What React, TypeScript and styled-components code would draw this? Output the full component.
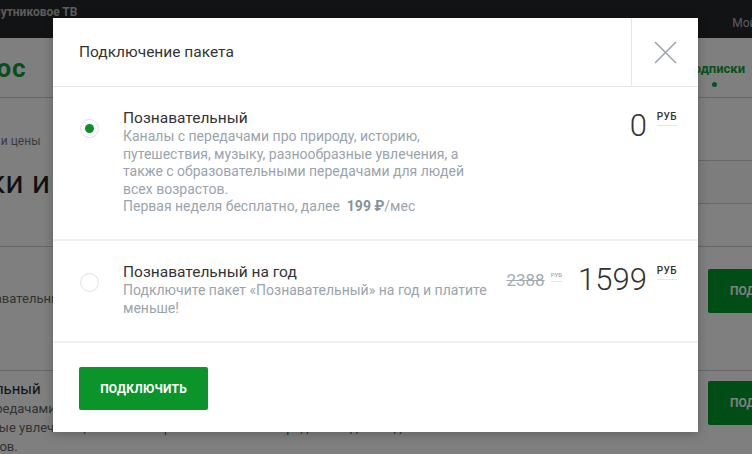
import React from "react";
import styled, { createGlobalStyle } from "styled-components";

const Global = createGlobalStyle`
  html, body { margin: 0; padding: 0; width: 752px; height: 454px; overflow: hidden; background: #fff; }
  body { font-family: Roboto, "Noto Sans", "Liberation Sans", sans-serif; color: #333; }
  * { box-sizing: border-box; }
`;

/* ---------- background page ---------- */
const Page = styled.div`
  width: 752px;
  height: 454px;
  overflow: hidden;
  position: relative;
  background: #fff;
`;

const TopBar = styled.div`
  height: 38px;
  background: #24262a;
  display: flex;
  justify-content: space-between;
  color: #b8b8b8;
  font-size: 12px;
`;

const TopLink = styled.span<{ $shift: number; $top: number; $bold?: boolean }>`
  margin-left: ${(p) => p.$shift}px;
  margin-right: ${(p) => (p.$shift === 0 ? -53 : 0)}px;
  padding-top: ${(p) => p.$top}px;
  font-weight: ${(p) => (p.$bold ? 700 : 400)};
  white-space: nowrap;
`;

const NavBar = styled.div`
  height: 60px;
  border-bottom: 1px solid #cfcfcf;
  display: flex;
  align-items: center;
  justify-content: space-between;
`;

const Logo = styled.div`
  margin-left: -72px;
  font-size: 26px;
  font-weight: 700;
  color: #159c3a;
  letter-spacing: 1px;
`;

const NavItem = styled.div`
  margin-right: 7px;
  display: flex;
  flex-direction: column;
  align-items: center;
  gap: 6px;
  font-size: 13px;
  font-weight: 700;
  color: #12a23c;
  padding-top: 12px;
  &::after {
    content: "";
    width: 5px;
    height: 5px;
    border-radius: 50%;
    background: #12a23c;
  }
`;

const Content = styled.div`
  display: flex;
  flex-direction: column;
`;

const Crumbs = styled.div`
  margin: 36px 0 0 -45px;
  font-size: 12px;
  color: #777;
`;

const HeadRow = styled.div`
  display: flex;
  justify-content: space-between;
  align-items: center;
  margin-top: 12px;
`;

const Heading = styled.h1`
  margin: 0 0 0 -125px;
  font-size: 32px;
  font-weight: 400;
  color: #222;
  white-space: nowrap;
`;

const SearchBox = styled.div`
  width: 160px;
  height: 44px;
  margin-right: -60px;
  border-top: 1px solid #d0d0d0;
  border-bottom: 1px solid #d0d0d0;
  background: #fbfbfb;
`;

const List = styled.div`
  margin-top: 42px;
  border-top: 1px solid #cfcfcf;
`;

const PkgRow = styled.div<{ $h: number }>`
  height: ${(p) => p.$h}px;
  border-bottom: 1px solid #cfcfcf;
  display: flex;
  justify-content: space-between;
  align-items: flex-start;
`;

const PkgText = styled.div<{ $shift: number; $top: number }>`
  margin-left: ${(p) => p.$shift}px;
  padding-top: ${(p) => p.$top}px;
  width: 500px;
`;

const PkgTitle = styled.div`
  font-size: 15px;
  color: #222;
  line-height: 20px;
`;

const PkgDesc = styled.div`
  font-size: 13px;
  color: #666;
  line-height: 19px;
`;

const PageBtn = styled.div<{ $top: number }>`
  margin-top: ${(p) => p.$top}px;
  width: 100px;
  height: 44px;
  margin-right: -56px;
  background: #009a2a;
  border-radius: 2px;
  color: #fff;
  font-size: 12px;
  font-weight: 700;
  display: flex;
  align-items: center;
  padding-left: 22px;
`;

/* ---------- overlay & modal ---------- */
const Overlay = styled.div`
  position: absolute;
  inset: 0;
  background: rgba(0, 0, 0, 0.5);
  padding: 18px 0 0 53px;
`;

const Modal = styled.div`
  width: 645px;
  height: 414px;
  background: #fff;
  display: flex;
  flex-direction: column;
  box-shadow: 0 2px 10px rgba(0, 0, 0, 0.25);
`;

const Header = styled.div`
  height: 69px;
  display: flex;
  border-bottom: 1px solid #e2e7e9;
`;

const Title = styled.div`
  flex: 1;
  padding-left: 26px;
  display: flex;
  align-items: center;
  font-size: 15.5px;
  color: #333;
`;

const Close = styled.button`
  width: 67px;
  border: none;
  border-left: 1px solid #e2e7e9;
  background: transparent;
  padding: 0;
  display: flex;
  align-items: center;
  justify-content: center;
  cursor: pointer;
`;

const Option = styled.div<{ $h: number }>`
  height: ${(p) => p.$h}px;
  border-bottom: 2px solid #eef0f1;
  display: flex;
  align-items: flex-start;
  padding: 21px 21px 0 27px;
`;

const Radio = styled.div<{ $on?: boolean }>`
  width: 19px;
  height: 19px;
  flex: none;
  margin-top: 11px;
  border-radius: 50%;
  border: 1px solid #dde2e4;
  display: flex;
  align-items: center;
  justify-content: center;
  &::after {
    content: "";
    width: 9px;
    height: 9px;
    border-radius: 50%;
    background: ${(p) => (p.$on ? "#0a8f2b" : "transparent")};
  }
`;

const Info = styled.div`
  margin-left: 24px;
  width: 368px;
`;

const OptTitle = styled.div`
  font-size: 15.5px;
  line-height: 20px;
  color: #333;
`;

const OptDesc = styled.div`
  font-size: 14px;
  line-height: 17.5px;
  color: #9aa4ad;
  b {
    font-weight: 700;
    color: #86919b;
  }
`;

const Prices = styled.div`
  margin-left: auto;
  display: flex;
  align-items: flex-start;
`;

const Price = styled.div<{ $old?: boolean }>`
  display: flex;
  align-items: flex-start;
  margin-left: ${(p) => (p.$old ? 0 : 16)}px;
  margin-top: ${(p) => (p.$old ? 8 : 0)}px;
`;

const Amount = styled.span<{ $old?: boolean }>`
  font-size: ${(p) => (p.$old ? 17 : 31)}px;
  line-height: ${(p) => (p.$old ? 20 : 36)}px;
  font-weight: ${(p) => (p.$old ? 400 : 300)};
  color: ${(p) => (p.$old ? "#a3acb4" : "#333")};
  text-decoration: ${(p) => (p.$old ? "line-through" : "none")};
`;

const Cur = styled.span<{ $old?: boolean }>`
  margin-left: ${(p) => (p.$old ? 6 : 10)}px;
  margin-top: ${(p) => (p.$old ? 1 : 3)}px;
  font-size: ${(p) => (p.$old ? 6 : 10)}px;
  letter-spacing: ${(p) => (p.$old ? 0 : 0.4)}px;
  line-height: ${(p) => (p.$old ? 8 : 11)}px;
  padding-bottom: ${(p) => (p.$old ? 2 : 3)}px;
  border-bottom: 1px solid #e4e8ea;
  color: ${(p) => (p.$old ? "#a3acb4" : "#333")};
  font-weight: 500;
`;

const Footer = styled.div`
  padding: 24px 0 0 26px;
`;

const Connect = styled.button`
  width: 129px;
  height: 43px;
  border: none;
  border-radius: 2px;
  background: #0a9429;
  color: #fff;
  font-family: Roboto, "Noto Sans", sans-serif;
  font-size: 12px;
  font-weight: 700;
  letter-spacing: 0.2px;
  cursor: pointer;
`;

const CloseIcon = () => (
  <svg width="23" height="23" viewBox="0 0 23 23" fill="none">
    <path d="M1 1 L22 22 M22 1 L1 22" stroke="#9ba6b0" strokeWidth="1.6" />
  </svg>
);

export default function App() {
  return (
    <Page>
      <Global />
      <TopBar>
        <TopLink $shift={-14} $top={5} $bold>
          Спутниковое ТВ
        </TopLink>
        <TopLink $shift={0} $top={16}>
          Мой кабинет
        </TopLink>
      </TopBar>
      <NavBar>
        <Logo>Космос</Logo>
        <NavItem>Подписки</NavItem>
      </NavBar>
      <Content>
        <Crumbs>Пакеты и цены</Crumbs>
        <HeadRow>
          <Heading>Подписки и пакеты</Heading>
          <SearchBox />
        </HeadRow>
        <List>
          <PkgRow $h={124}>
            <PkgText $shift={-36} $top={42}>
              <PkgDesc>Познавательный</PkgDesc>
            </PkgText>
            <PageBtn $top={22}>ПОДКЛЮЧИТЬ</PageBtn>
          </PkgRow>
          <PkgRow $h={120}>
            <PkgText $shift={-80} $top={8}>
              <PkgTitle>Познавательный</PkgTitle>
              <PkgDesc>
                Каналы с передачами про природу, историю, путешествия, музыку,
                разнообразные увлечения, а также с образовательными передачами для
                людей всех возрастов.
              </PkgDesc>
            </PkgText>
            <PageBtn $top={10}>ПОДКЛЮЧИТЬ</PageBtn>
          </PkgRow>
        </List>
      </Content>

      <Overlay>
        <Modal>
          <Header>
            <Title>Подключение пакета</Title>
            <Close aria-label="Закрыть">
              <CloseIcon />
            </Close>
          </Header>

          <Option $h={154}>
            <Radio $on />
            <Info>
              <OptTitle>Познавательный</OptTitle>
              <OptDesc>
                Каналы с передачами про природу, историю, путешествия, музыку,
                разнообразные увлечения, а также с образовательными передачами для
                людей всех возрастов.
                <br />
                Первая неделя бесплатно, далее&nbsp; <b>199 ₽</b>/мес
              </OptDesc>
            </Info>
            <Prices>
              <Price>
                <Amount>0</Amount>
                <Cur>РУБ</Cur>
              </Price>
            </Prices>
          </Option>

          <Option $h={102}>
            <Radio />
            <Info>
              <OptTitle>Познавательный на год</OptTitle>
              <OptDesc>
                Подключите пакет «Познавательный» на год и платите меньше!
              </OptDesc>
            </Info>
            <Prices>
              <Price $old>
                <Amount $old>2388</Amount>
                <Cur $old>РУБ</Cur>
              </Price>
              <Price>
                <Amount>1599</Amount>
                <Cur>РУБ</Cur>
              </Price>
            </Prices>
          </Option>

          <Footer>
            <Connect>ПОДКЛЮЧИТЬ</Connect>
          </Footer>
        </Modal>
      </Overlay>
    </Page>
  );
}
